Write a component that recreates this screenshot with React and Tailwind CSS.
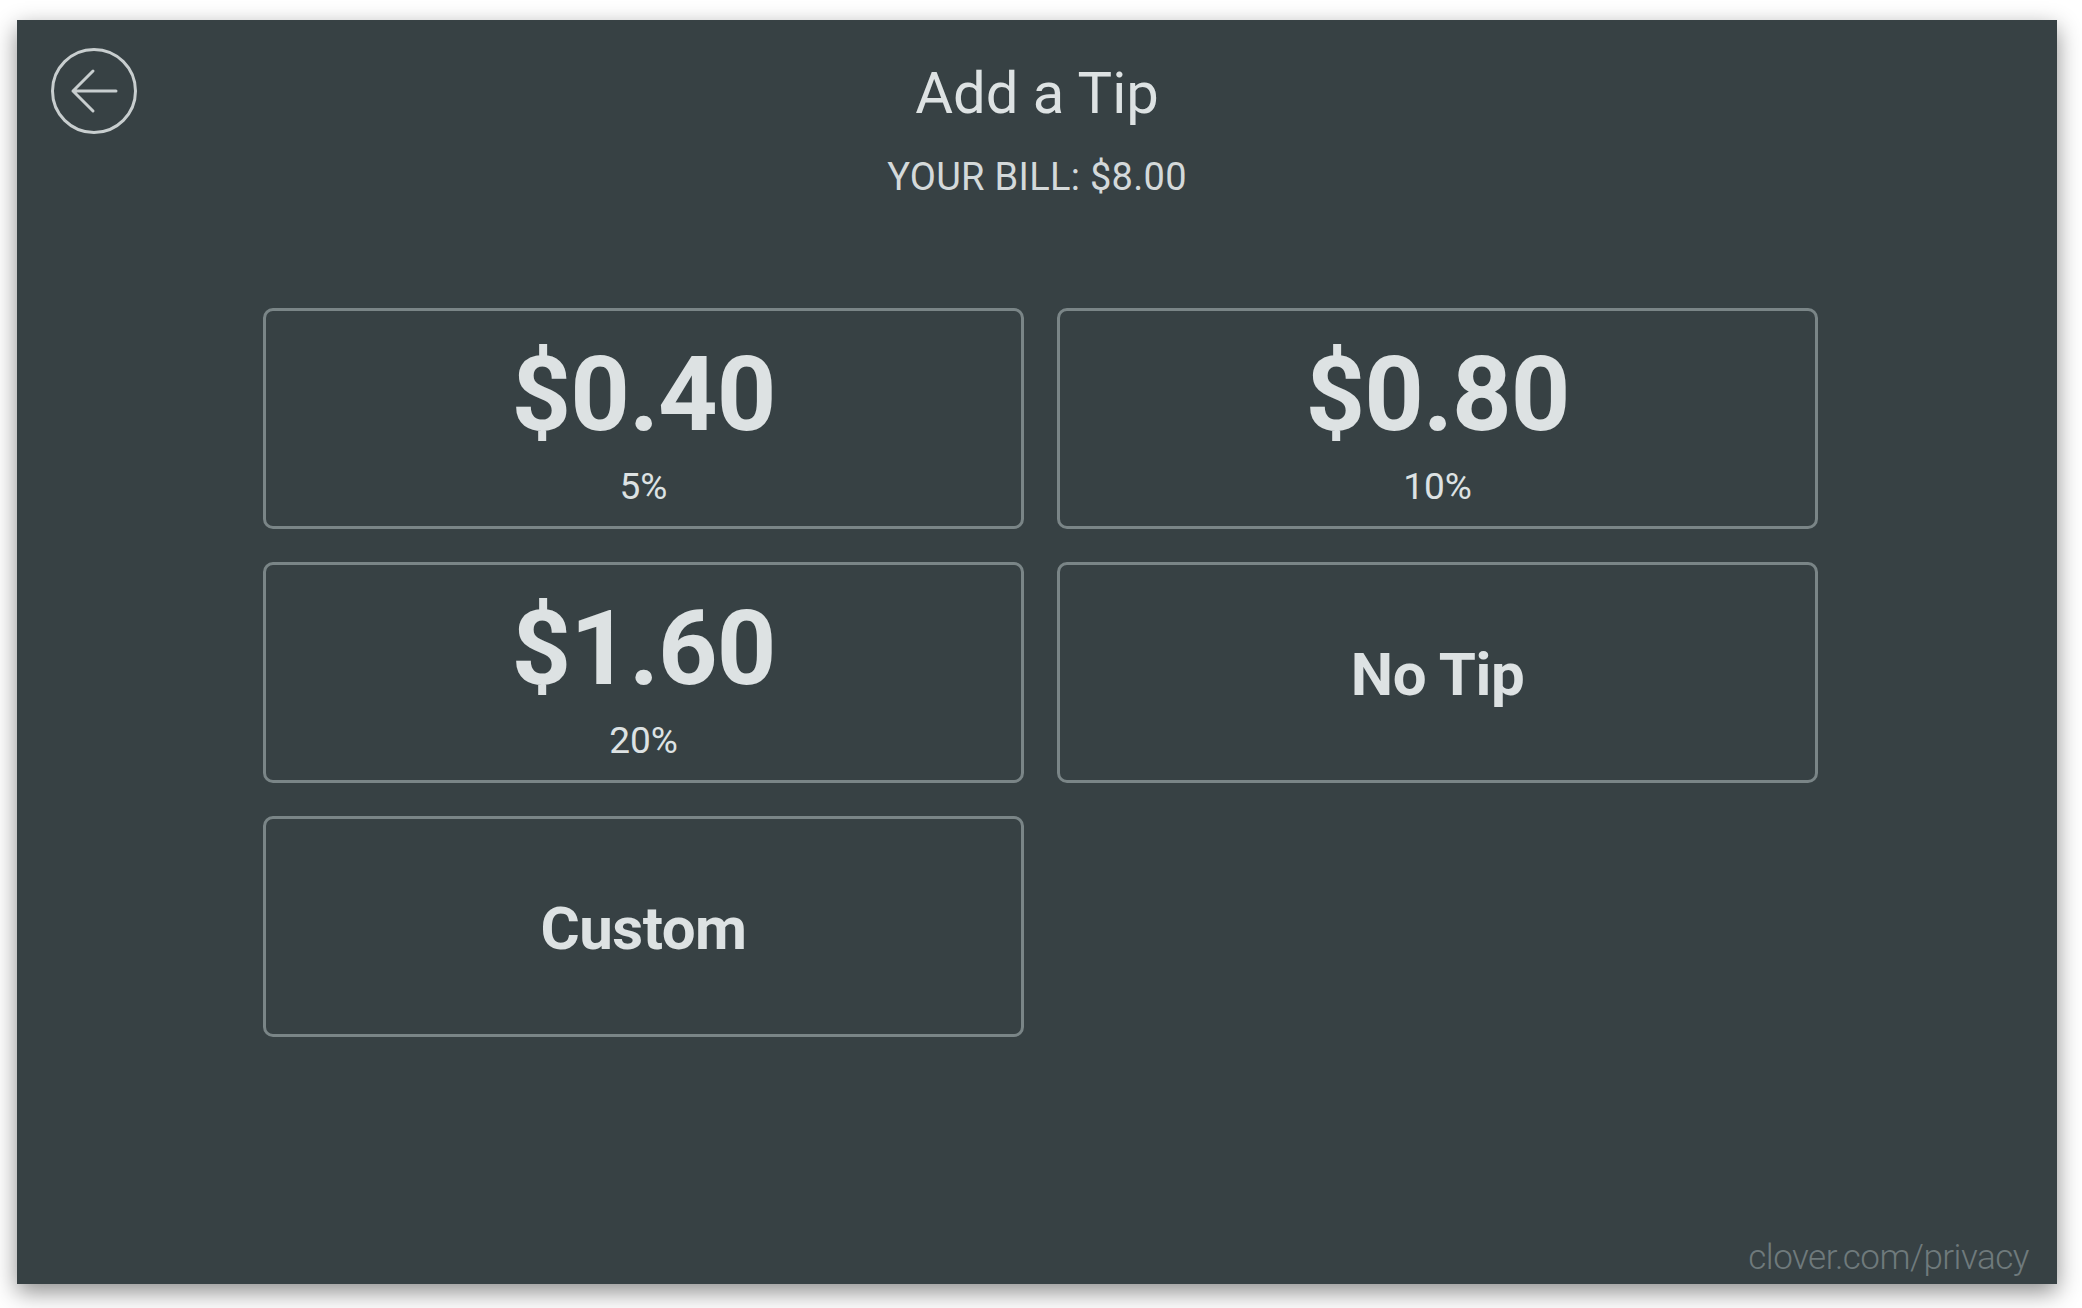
import React from 'react';

const font = { fontFamily: 'Roboto, "Noto Sans", sans-serif' };

const BackIcon = () => (
    <svg width="86" height="86" viewBox="0 0 86 86" fill="none" stroke="#c8cecf" strokeWidth="3" strokeLinecap="round" strokeLinejoin="round">
        <circle cx="43" cy="43" r="41.5" />
        <path d="M22 43h43M42 23L22 43l20 20" />
    </svg>
);

const TipButton = ({ amount, percent, label }) => (
    <button className="h-[221px] rounded-[10px] border-[3px] border-[#7a8587] flex flex-col items-center text-[#dde2e3]">
        {label ? (
            <span className="m-auto pt-[4px] text-[60px] leading-none font-bold tracking-[-0.5px]">{label}</span>
        ) : (
            <>
                <span className="mt-[32px] text-[104px] leading-none font-bold tracking-[-1px]">{amount}</span>
                <span className="mt-[21px] text-[37px] leading-none">{percent}</span>
            </>
        )}
    </button>
);

export default function App() {
    return (
        <div className="w-[2082px] h-[1308px] bg-white pt-[20px] pl-[17px]" style={font}>
            <div className="w-[2040px] h-[1264px] bg-[#374144] shadow-[0_8px_22px_rgba(0,0,0,0.45)] flex flex-col">
                <div className="grid grid-cols-[1fr_auto_1fr] pt-[28px]">
                    <div className="pl-[34px]">
                        <BackIcon />
                    </div>
                    <div className="flex flex-col items-center pt-[16px]">
                        <h1 className="text-[58px] leading-[58px] font-normal text-[#dde2e3]">Add a Tip</h1>
                        <p className="mt-[39px] text-[38px] leading-[32px] tracking-[0.3px] text-[#d4d9da]">YOUR BILL: $8.00</p>
                    </div>
                    <div />
                </div>

                <div className="mt-[115px] ml-[246px] w-[1555px] grid grid-cols-2 gap-[33px]">
                    <TipButton amount="$0.40" percent="5%" />
                    <TipButton amount="$0.80" percent="10%" />
                    <TipButton amount="$1.60" percent="20%" />
                    <TipButton label="No Tip" />
                    <TipButton label="Custom" />
                </div>

                <div className="mt-auto flex justify-end pr-[28px] pb-0">
                    <span className="text-[35px] font-light text-[#6f7a7c] tracking-[-0.5px]">clover.com/privacy</span>
                </div>
            </div>
        </div>
    );
}
